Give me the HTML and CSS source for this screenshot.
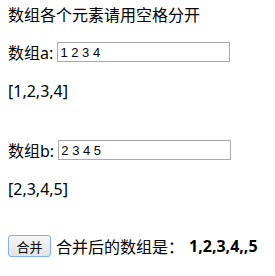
FILE: index.html
```html
<!DOCTYPE html>
<html lang="zh-CN">
<head>
    <meta charset="UTF-8">
    <title>合并数组</title>
    <link rel="stylesheet" href="styles.css">
</head>
<body>
    <div class="tip">数组各个元素请用空格分开</div>
    <div class="row">数组a: <input type="text" class="shuru" value="1 2 3 4"></div>
    <div class="jieguo">[1,2,3,4]</div>
    <div class="row row-b">数组b: <input type="text" class="shuru" value="2 3 4 5"></div>
    <div class="jieguo">[2,3,4,5]</div>
    <div class="row row-btn">
        <button class="botao">合并</button>
        <span class="texto">合并后的数组是：</span>
        <b class="hebing">1,2,3,4,,5</b>
    </div>
</body>
</html>
```

FILE: styles.css
```css
body {
    margin: 0;
    padding: 7px 8px;
    font-family: "Noto Sans", "Noto Sans CJK SC", sans-serif;
    font-size: 16px;
    color: #000;
    background: #fff;
}
.tip {
    height: 16px;
    line-height: 16px;
}
.row {
    margin-top: 19px;
    height: 20px;
    display: flex;
    align-items: center;
    white-space: pre;
}
.shuru {
    box-sizing: border-box;
    width: 173px;
    height: 20px;
    margin: 0;
    padding: 1px 2px;
    border: 1px solid #a9a9a9;
    font-family: "Liberation Sans", Arial, sans-serif;
    font-size: 13px;
    color: #000;
}
.jieguo {
    margin-top: 19px;
    height: 20px;
    line-height: 20px;
}
.row-b {
    margin-top: 39px;
}
.row-btn {
    margin-top: 36px;
    height: 22px;
}
.botao {
    box-sizing: border-box;
    width: 43px;
    height: 22px;
    margin: 0 5px 0 0;
    padding: 0;
    border: 1px solid #7eb4ea;
    border-radius: 3px;
    background: linear-gradient(#f6f6f6, #e3e3e3);
    font-family: "Noto Sans CJK SC", sans-serif;
    font-size: 13px;
    color: #000;
}
.hebing {
    margin-left: 5px;
    font-weight: bold;
}
```
